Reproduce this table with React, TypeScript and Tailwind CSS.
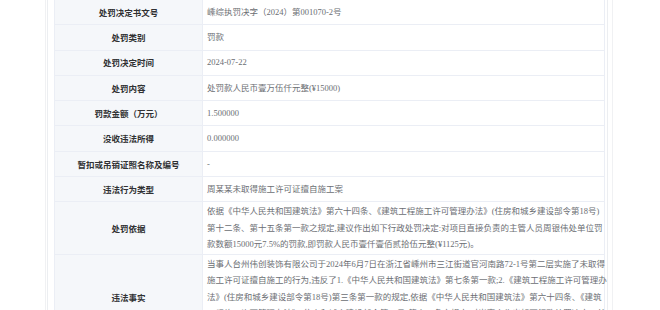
import React from 'react';

type Row = {
  label: string;
  lines: string[];
};

const rows: Row[] = [
  { label: '处罚决定书文号', lines: ['嵊综执罚决字（2024）第001070-2号'] },
  { label: '处罚类别', lines: ['罚款'] },
  { label: '处罚决定时间', lines: ['2024-07-22'] },
  { label: '处罚内容', lines: ['处罚款人民币壹万伍仟元整(¥15000)'] },
  { label: '罚款金额（万元）', lines: ['1.500000'] },
  { label: '没收违法所得', lines: ['0.000000'] },
  { label: '暂扣或吊销证照名称及编号', lines: ['-'] },
  { label: '违法行为类型', lines: ['周某某未取得施工许可证擅自施工案'] },
  {
    label: '处罚依据',
    lines: [
      '依据《中华人民共和国建筑法》第六十四条、《建筑工程施工许可管理办法》(住房和城乡建设部令第18号)',
      '第十二条、第十五条第一款之规定,建议作出如下行政处罚决定:对项目直接负责的主管人员周银伟处单位罚',
      '款数额15000元7.5%的罚款,即罚款人民币壹仟壹佰贰拾伍元整(¥1125元)。',
    ],
  },
  {
    label: '违法事实',
    lines: [
      '当事人台州伟创装饰有限公司于2024年6月7日在浙江省嵊州市三江街道官河南路72-1号第二层实施了未取得',
      '施工许可证擅自施工的行为,违反了1.《中华人民共和国建筑法》第七条第一款;2.《建筑工程施工许可管理办',
      '法》(住房和城乡建设部令第18号)第三条第一款的规定,依据《中华人民共和国建筑法》第六十四条、《建筑',
      '工程施工许可管理办法》(住房和城乡建设部令第18号)第十二条之规定,对当事人作出如下行政处罚决定:1.处',
      '罚款人民币壹万伍仟元整(¥15000)。',
    ],
  },
];

const DetailRow = ({ label, lines }: Row) => {
  return (
    <div className="grid grid-cols-[148px_1fr] border-b border-[#ebeef5]">
      <div className="flex items-center justify-center border-r border-[#ebeef5] bg-[#f5f7fa] px-2 text-center font-bold text-[#303133] [font-family:'Noto_Sans_CJK_SC',sans-serif]">
        {label}
      </div>
      <div className="flex min-h-[24.3px] flex-col justify-center py-[1px] pl-[4px] text-[#6b6e73] [font-family:'Liberation_Serif','Noto_Sans_CJK_SC',serif]">
        {lines.map((line, i) => (
          <div key={i} className="whitespace-nowrap">
            {line}
          </div>
        ))}
      </div>
    </div>
  );
};

export default function App() {
  return (
    <div className="min-h-[310px] overflow-hidden bg-white text-[8.5px] leading-[16.5px]">
      <div className="ml-[45px] w-[568px] border-x border-[#f0f1f3] pl-[1px]">
        <div className="w-[561px] border-x border-[#eceef1] pl-[6px]">
          <div className="w-[551px] border-x border-[#ebeef5]">
            {rows.map((row) => (
              <DetailRow key={row.label} {...row} />
            ))}
          </div>
        </div>
      </div>
    </div>
  );
}
